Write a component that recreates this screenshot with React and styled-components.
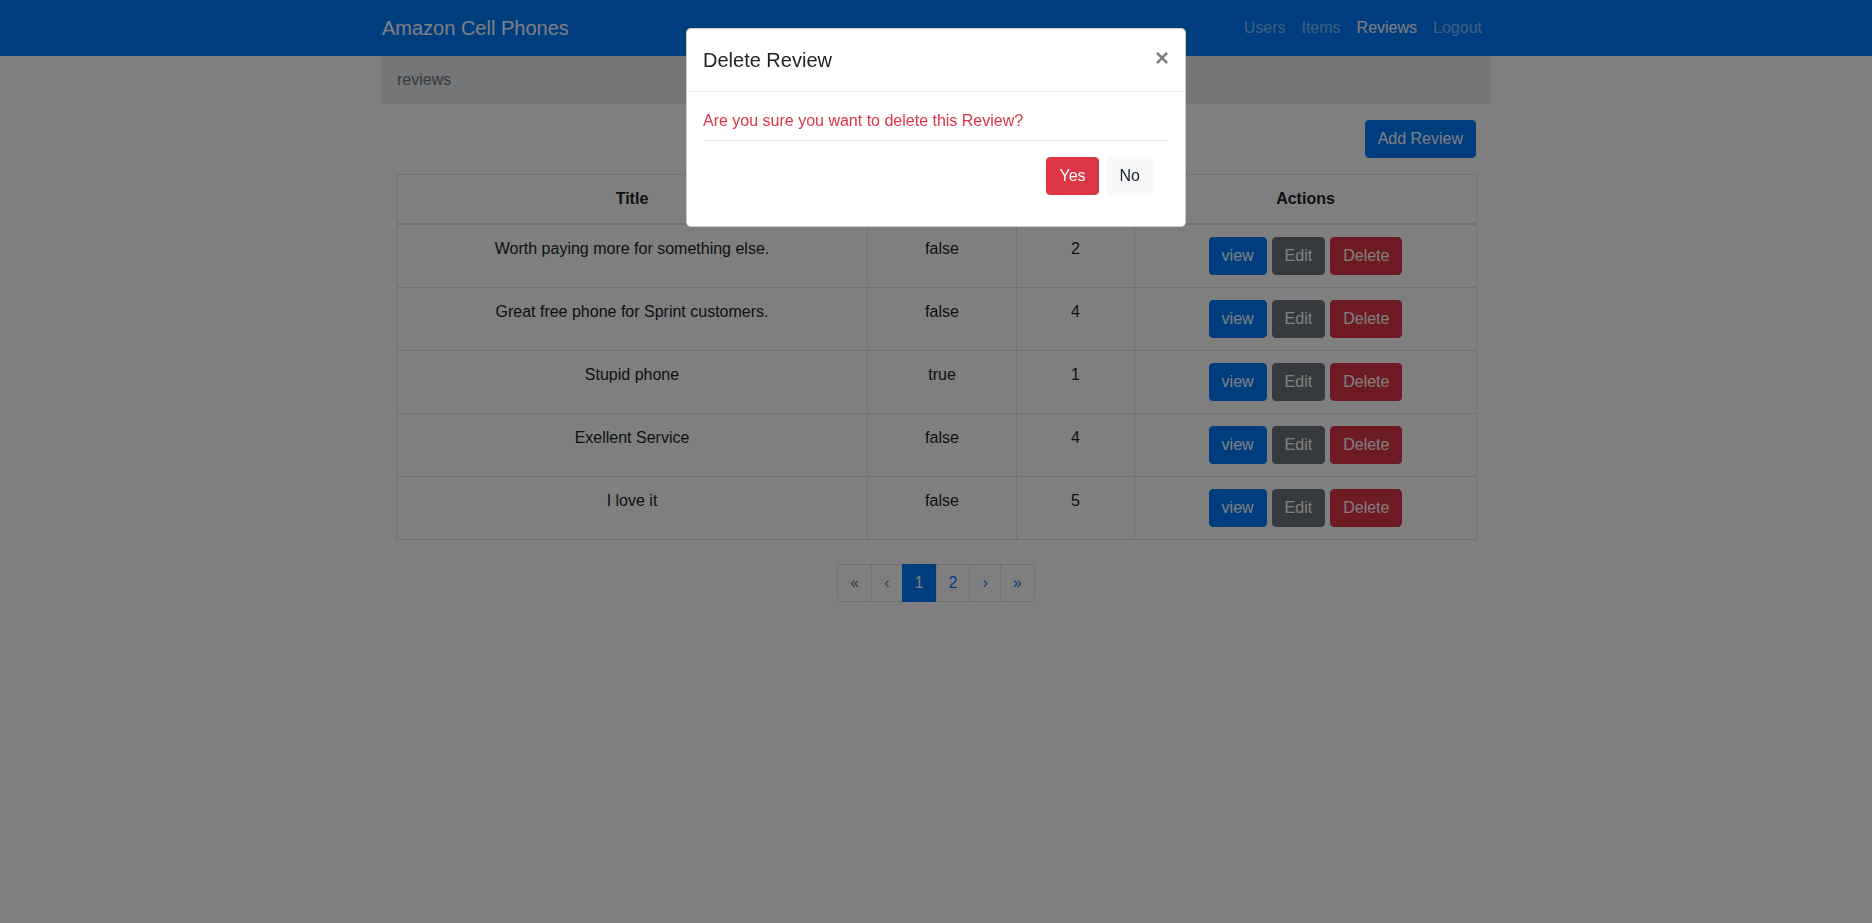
import styled, { createGlobalStyle } from "styled-components";

const reviews = [
  { title: "Worth paying more for something else.", verified: "false", rating: 2 },
  { title: "Great free phone for Sprint customers.", verified: "false", rating: 4 },
  { title: "Stupid phone", verified: "true", rating: 1 },
  { title: "Exellent Service", verified: "false", rating: 4 },
  { title: "I love it", verified: "false", rating: 5 },
];

const variants = {
  primary: { bg: "#007bff", color: "#fff" },
  secondary: { bg: "#6c757d", color: "#fff" },
  danger: { bg: "#dc3545", color: "#fff" },
  light: { bg: "#f8f9fa", color: "#212529" },
};

export default function App() {
  return (
    <>
      <GlobalStyle />
      <Navbar>
        <NavInner>
          <Brand href="#">Amazon Cell Phones</Brand>
          <NavLinks>
            <NavLink href="#">Users</NavLink>
            <NavLink href="#">Items</NavLink>
            <NavLink href="#" $active>Reviews</NavLink>
            <NavLink href="#">Logout</NavLink>
          </NavLinks>
        </NavInner>
      </Navbar>

      <Container>
        <Breadcrumb>reviews</Breadcrumb>
        <Content>
          <Toolbar>
            <Button $variant="primary">Add Review</Button>
          </Toolbar>
          <Table>
            <thead>
              <tr>
                <Th $width={471}>Title</Th>
                <Th $width={149}>Verified</Th>
                <Th $width={118}>Rating</Th>
                <Th $width={342}>Actions</Th>
              </tr>
            </thead>
            <tbody>
              {reviews.map((r) => (
                <tr key={r.title}>
                  <Td>{r.title}</Td>
                  <Td>{r.verified}</Td>
                  <Td>{r.rating}</Td>
                  <Td>
                    <Actions>
                      <Button $variant="primary">view</Button>
                      <Button $variant="secondary">Edit</Button>
                      <Button $variant="danger">Delete</Button>
                    </Actions>
                  </Td>
                </tr>
              ))}
            </tbody>
          </Table>
          <Pagination>
            <PageLink $disabled>«</PageLink>
            <PageLink $disabled>‹</PageLink>
            <PageLink $active>1</PageLink>
            <PageLink>2</PageLink>
            <PageLink>›</PageLink>
            <PageLink>»</PageLink>
          </Pagination>
        </Content>
      </Container>

      <Backdrop />
      <Modal>
        <ModalHeader>
          <ModalTitle>Delete Review</ModalTitle>
          <Close>×</Close>
        </ModalHeader>
        <ModalBody>
          <Message>Are you sure you want to delete this Review?</Message>
          <Rule />
          <ModalButtons>
            <Button $variant="danger">Yes</Button>
            <Button $variant="light">No</Button>
          </ModalButtons>
        </ModalBody>
      </Modal>
    </>
  );
}

const GlobalStyle = createGlobalStyle`
  * { box-sizing: border-box; }
  body {
    margin: 0;
    background: #fff;
    color: #212529;
    font-family: "Liberation Sans", Arial, sans-serif;
    font-size: 16px;
    line-height: 1.5;
  }
`;

const Navbar = styled.nav`
  background: #007bff;
  height: 56px;
`;

const NavInner = styled.div`
  max-width: 1140px;
  height: 100%;
  margin: 0 auto;
  padding: 8px 16px;
  display: flex;
  align-items: center;
  justify-content: space-between;
`;

const Brand = styled.a`
  color: #fff;
  font-size: 20px;
  line-height: 30px;
  text-decoration: none;
  padding: 5px 0;
`;

const NavLinks = styled.div`
  display: flex;
`;

const NavLink = styled.a`
  color: ${(p) => (p.$active ? "#fff" : "rgba(255,255,255,.5)")};
  text-decoration: none;
  padding: 8px;
`;

const Container = styled.div`
  max-width: 1140px;
  margin: 0 auto;
  padding: 0 15px;
`;

const Breadcrumb = styled.div`
  background: #e9ecef;
  border-radius: 4px;
  padding: 12px 16px;
  margin-bottom: 16px;
  color: #6c757d;
`;

const Content = styled.div`
  padding: 0 15px;
`;

const Toolbar = styled.div`
  display: flex;
  justify-content: flex-end;
  margin-bottom: 16px;
`;

const Button = styled.button`
  font-family: inherit;
  font-size: 16px;
  line-height: 1.5;
  padding: 6px 12px;
  border-radius: 4px;
  border: 1px solid ${(p) => variants[p.$variant].bg};
  background: ${(p) => variants[p.$variant].bg};
  color: ${(p) => variants[p.$variant].color};
  cursor: pointer;
`;

const Table = styled.table`
  width: 100%;
  border-collapse: collapse;
  table-layout: fixed;
  margin-bottom: 24px;
  text-align: center;
`;

const Th = styled.th`
  width: ${(p) => p.$width}px;
  padding: 12px;
  border: 1px solid #dee2e6;
  border-bottom-width: 2px;
  vertical-align: bottom;
  font-weight: 700;
`;

const Td = styled.td`
  padding: 12px;
  border: 1px solid #dee2e6;
  vertical-align: top;
`;

const Actions = styled.div`
  display: flex;
  justify-content: center;
  gap: 5px;
`;

const Pagination = styled.div`
  display: flex;
  justify-content: center;
`;

const PageLink = styled.a`
  display: block;
  padding: 8px 12px;
  line-height: 1.25;
  margin-left: -1px;
  border: 1px solid ${(p) => (p.$active ? "#007bff" : "#dee2e6")};
  background: ${(p) => (p.$active ? "#007bff" : "#fff")};
  color: ${(p) => (p.$active ? "#fff" : p.$disabled ? "#6c757d" : "#007bff")};
  &:first-child {
    margin-left: 0;
    border-radius: 4px 0 0 4px;
  }
  &:last-child {
    border-radius: 0 4px 4px 0;
  }
`;

const Backdrop = styled.div`
  position: fixed;
  inset: 0;
  background: #000;
  opacity: 0.5;
`;

const Modal = styled.div`
  position: fixed;
  top: 28px;
  left: 50%;
  width: 500px;
  margin-left: -250px;
  background: #fff;
  border: 1px solid rgba(0, 0, 0, 0.2);
  border-radius: 4.8px;
`;

const ModalHeader = styled.div`
  display: flex;
  align-items: flex-start;
  justify-content: space-between;
  padding: 16px;
  border-bottom: 1px solid #e9ecef;
`;

const ModalTitle = styled.h5`
  margin: 0;
  font-size: 20px;
  font-weight: 500;
  line-height: 1.5;
`;

const Close = styled.button`
  background: transparent;
  border: 0;
  padding: 0;
  margin-top: -4px;
  font-family: inherit;
  font-size: 24px;
  font-weight: 700;
  line-height: 1;
  color: #000;
  opacity: 0.5;
  text-shadow: 0 1px 0 #fff;
  cursor: pointer;
  align-self: center;
`;

const ModalBody = styled.div`
  padding: 17px 16px 15px;
`;

const Message = styled.div`
  color: #dc3545;
`;

const Rule = styled.hr`
  margin: 7px 0 16px;
  border: 0;
  border-top: 1px solid rgba(0, 0, 0, 0.1);
`;

const ModalButtons = styled.div`
  display: flex;
  justify-content: flex-end;
  gap: 8px;
  padding-right: 16px;
  margin-bottom: 16px;
`;
